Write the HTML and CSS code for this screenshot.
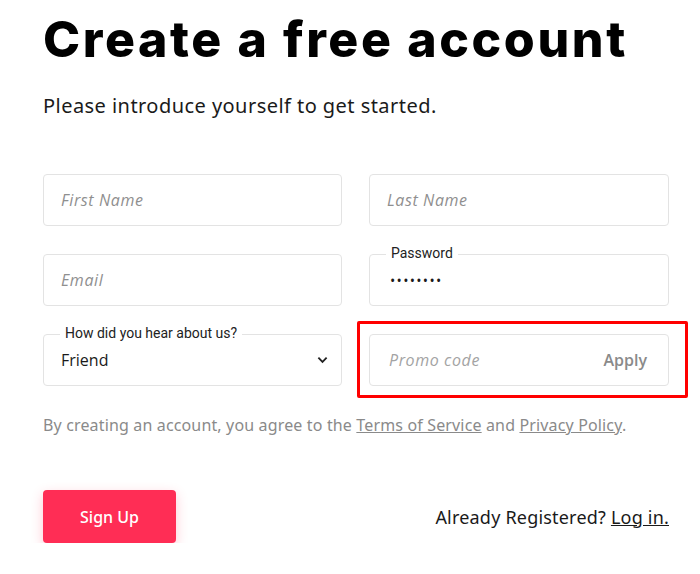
FILE: index.html
```html
<!DOCTYPE html>
<html lang="en">
<head>
    <meta charset="UTF-8">
    <meta name="viewport" content="width=device-width, initial-scale=1.0">
    <title>Create a free account</title>
    <link rel="stylesheet" href="styles.css">
</head>
<body>
    <div class="signup">
        <h1 class="title">Create a free account</h1>
        <p class="subtitle">Please introduce yourself to get started.</p>

        <form class="form-grid">
            <div class="field">
                <input class="input" type="text" placeholder="First Name">
            </div>
            <div class="field">
                <input class="input" type="text" placeholder="Last Name">
            </div>
            <div class="field">
                <input class="input" type="email" placeholder="Email">
            </div>
            <div class="field">
                <span class="float-label">Password</span>
                <input class="input filled" type="password" value="password">
            </div>
            <div class="field">
                <span class="float-label">How did you hear about us?</span>
                <div class="select">
                    <span>Friend</span>
                    <svg viewBox="0 0 12 8" width="11" height="8" xmlns="http://www.w3.org/2000/svg">
                        <path d="M1.5 1.5l4.5 4.5 4.5-4.5" fill="none" stroke="#222" stroke-width="2"/>
                    </svg>
                </div>
            </div>
            <div class="field promo-wrap">
                <div class="promo">
                    <input class="promo-input" type="text" placeholder="Promo code">
                    <span class="apply">Apply</span>
                </div>
            </div>
        </form>

        <p class="terms">By creating an account, you agree to the <a href="#">Terms of Service</a> and <a href="#">Privacy Policy</a>.</p>

        <div class="actions">
            <button class="btn-signup" type="button">Sign Up</button>
            <p class="login">Already Registered? <a href="#">Log in.</a></p>
        </div>
    </div>
</body>
</html>
```

FILE: styles.css
```css
* {
    margin: 0;
    padding: 0;
    box-sizing: border-box;
}

body {
    background: #ffffff;
    color: #1a1a1a;
    font-family: 'Noto Sans', sans-serif;
}

.signup {
    width: 626px;
    margin-left: 43px;
    padding-top: 12px;
}

.title {
    font-family: 'Inter', sans-serif;
    font-weight: 800;
    font-size: 50px;
    line-height: 54px;
    letter-spacing: 2.6px;
    color: #000;
    white-space: nowrap;
}

.subtitle {
    margin-top: 27px;
    font-size: 20px;
    line-height: 26px;
    letter-spacing: 0.45px;
    color: #1a1a1a;
}

.form-grid {
    margin-top: 55px;
    display: grid;
    grid-template-columns: 299px 300px;
    column-gap: 27px;
    row-gap: 28px;
}

.field {
    position: relative;
    height: 52px;
}

.input {
    width: 100%;
    height: 52px;
    border: 1px solid #e3e3e3;
    border-radius: 4px;
    padding: 0 17px;
    font-family: 'Open Sans', sans-serif;
    font-size: 16px;
    color: #1a1a1a;
    outline: none;
    background: #fff;
}

.input::placeholder,
.promo-input::placeholder {
    color: #8f8f8f;
    font-style: italic;
    letter-spacing: 0.6px;
}

.input.filled {
    font-size: 14px;
    letter-spacing: 1.3px;
    padding-left: 20px;
}

.float-label {
    position: absolute;
    top: -9px;
    left: 17px;
    padding: 0 5px;
    background: #fff;
    font-family: 'Roboto', sans-serif;
    font-size: 14px;
    line-height: 16px;
    color: #222;
}

.select {
    height: 52px;
    border: 1px solid #e3e3e3;
    border-radius: 4px;
    padding: 0 13px 0 17px;
    display: flex;
    align-items: center;
    justify-content: space-between;
    font-family: 'Open Sans', sans-serif;
    font-size: 16px;
    color: #1a1a1a;
}

.promo-wrap::before {
    content: "";
    position: absolute;
    top: -13px;
    left: -12px;
    right: -19px;
    bottom: -12px;
    border: 3px solid #ff0000;
    border-radius: 2px;
}

.promo {
    height: 52px;
    border: 1px solid #e3e3e3;
    border-radius: 4px;
    padding: 0 21px 0 19px;
    display: flex;
    align-items: center;
    justify-content: space-between;
}

.promo-input {
    border: none;
    outline: none;
    font-family: 'Open Sans', sans-serif;
    font-size: 16px;
    width: 150px;
}

.promo-input::placeholder {
    color: #a3a3a3;
}

.apply {
    font-family: 'Open Sans', sans-serif;
    font-size: 16px;
    font-weight: 600;
    color: #8a8a8a;
}

.terms {
    margin-top: 28px;
    font-size: 16px;
    line-height: 22px;
    letter-spacing: 0.15px;
    color: #8a8a8a;
}

.terms a {
    color: #8a8a8a;
    text-decoration: underline;
}

.actions {
    margin-top: 54px;
    display: flex;
    align-items: center;
    justify-content: space-between;
}

.btn-signup {
    width: 133px;
    height: 53px;
    border: none;
    border-radius: 4px;
    background: #ff2d55;
    color: #fff;
    font-family: 'Noto Sans', sans-serif;
    font-size: 16px;
    font-weight: 500;
    box-shadow: 0 4px 12px rgba(255, 45, 85, 0.25);
}

.login {
    font-size: 18px;
    letter-spacing: 0.2px;
    color: #1a1a1a;
}

.login a {
    color: #1a1a1a;
    text-decoration: underline;
}
```
